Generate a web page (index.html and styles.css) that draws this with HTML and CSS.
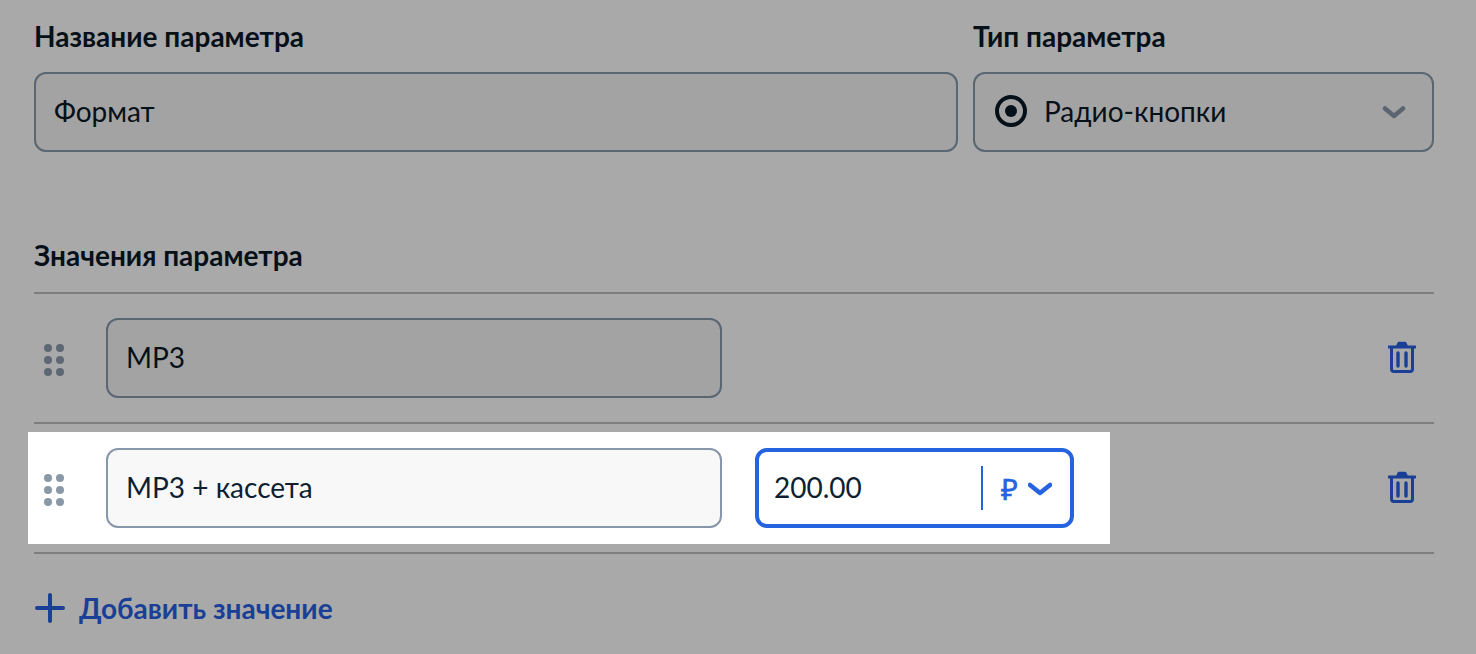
FILE: index.html
```html
<!DOCTYPE html>
<html lang="ru">
<head>
<meta charset="utf-8">
<title>Параметры</title>
<link rel="stylesheet" href="styles.css">
</head>
<body>
<main class="page">
  <section class="head-grid">
    <div class="field">
      <div class="label">Название параметра</div>
      <div class="box dim"><span class="val">Формат</span></div>
    </div>
    <div class="field">
      <div class="label">Тип параметра</div>
      <div class="box dim select">
        <svg class="radio" width="34" height="34" viewBox="0 0 34 34"><circle cx="17" cy="17" r="14" fill="none" stroke="#061019" stroke-width="4"/><circle cx="17" cy="17" r="6" fill="#061019"/></svg>
        <span class="val">Радио-кнопки</span>
        <svg class="chev" width="24" height="14" viewBox="0 0 24 14"><path d="M3 3.5l9 7.5 9-7.5" fill="none" stroke="#5a6571" stroke-width="4.5" stroke-linecap="round" stroke-linejoin="round"/></svg>
      </div>
    </div>
  </section>

  <h2 class="label section">Значения параметра</h2>

  <section class="rows">
    <div class="row">
      <div class="item">
        <svg class="grip" width="20" height="32" viewBox="0 0 20 32" fill="#5d6874"><circle cx="4" cy="4" r="4"/><circle cx="16" cy="4" r="4"/><circle cx="4" cy="16" r="4"/><circle cx="16" cy="16" r="4"/><circle cx="4" cy="28" r="4"/><circle cx="16" cy="28" r="4"/></svg>
        <div class="box dim value"><span class="val">MP3</span></div>
      </div>
      <svg class="trash" width="28" height="32" viewBox="0 0 28 32"><path d="M9 4.5l1.5-3h7l1.5 3z" fill="#193f96" stroke="#193f96" stroke-width="1.5" stroke-linejoin="round"/><path d="M1 6h26" stroke="#193f96" stroke-width="3" stroke-linecap="round"/><path d="M3.5 7v21a2.5 2.5 0 0 0 2.5 2.5h16a2.5 2.5 0 0 0 2.5-2.5V7" fill="none" stroke="#193f96" stroke-width="3"/><path d="M10 12v13M18 12v13" stroke="#193f96" stroke-width="3.4" stroke-linecap="round"/></svg>
    </div>
    <div class="row">
      <div class="item lit">
        <svg class="grip" width="20" height="32" viewBox="0 0 20 32" fill="#8a99a8"><circle cx="4" cy="4" r="4"/><circle cx="16" cy="4" r="4"/><circle cx="4" cy="16" r="4"/><circle cx="16" cy="16" r="4"/><circle cx="4" cy="28" r="4"/><circle cx="16" cy="28" r="4"/></svg>
        <div class="box bright value"><span class="val">MP3 + кассета</span></div>
        <div class="price">
          <span class="val amount">200.00</span>
          <span class="divider"></span>
          <span class="cur">₽</span>
          <svg class="cur-chev" width="24" height="14" viewBox="0 0 24 14"><path d="M2 3l10 8 10-8" fill="none" stroke="#2563e0" stroke-width="4.5" stroke-linecap="round" stroke-linejoin="round"/></svg>
        </div>
      </div>
      <svg class="trash" width="28" height="32" viewBox="0 0 28 32"><path d="M9 4.5l1.5-3h7l1.5 3z" fill="#193f96" stroke="#193f96" stroke-width="1.5" stroke-linejoin="round"/><path d="M1 6h26" stroke="#193f96" stroke-width="3" stroke-linecap="round"/><path d="M3.5 7v21a2.5 2.5 0 0 0 2.5 2.5h16a2.5 2.5 0 0 0 2.5-2.5V7" fill="none" stroke="#193f96" stroke-width="3"/><path d="M10 12v13M18 12v13" stroke="#193f96" stroke-width="3.4" stroke-linecap="round"/></svg>
    </div>
  </section>

  <div class="add">
    <svg width="30" height="30" viewBox="0 0 30 30"><path d="M15 2v26M2 15h26" stroke="#193f96" stroke-width="4" stroke-linecap="round"/></svg>
    <span>Добавить значение</span>
  </div>
</main>
</body>
</html>
```

FILE: styles.css
```css
* { box-sizing: border-box; }
html, body { margin: 0; height: 100%; overflow: hidden; }
body {
  background: #a9a9a9;
  font-family: "Lato", "Noto Sans", "Open Sans", sans-serif;
  color: #061019;
}
.page { padding: 18px 42px 0 34px; }
.head-grid { display: grid; grid-template-columns: 924px 461px; gap: 15px; }
.label { font-size: 28px; font-weight: 700; line-height: 36px; margin: 0; color: #061019; }
.field .label { margin-bottom: 18px; }
.box {
  height: 80px;
  border-radius: 12px;
  border: 2px solid #5a6672;
  display: flex;
  align-items: center;
  padding: 0 18px;
}
.dim { background: #a3a3a3; }
.bright { background: #f8f8f8; border-color: #8796a8; }
.val { font-size: 28px; line-height: 36px; position: relative; top: -1px; }
.lit .val { color: #0d1f30; }
.select { padding-left: 19px; }
.radio { margin-right: 16px; flex: none; position: relative; top: -1px; }
.chev { margin-left: auto; margin-right: 8px; }
.section { margin-top: 85px; }
.rows { margin-top: 19px; border-top: 2px solid #7e7e7e; }
.row {
  height: 130px;
  border-bottom: 2px solid #7e7e7e;
  display: flex;
  align-items: center;
  justify-content: space-between;
  padding-right: 18px;
}
.item {
  display: flex;
  align-items: center;
  margin-left: -6px;
  padding: 16px 36px 16px 16px;
}
.lit { background: #fff; }
.grip { flex: none; margin-right: 42px; position: relative; top: 2px; }
.trash { position: relative; top: -1px; }
.value { width: 616px; }
.price {
  width: 319px;
  height: 80px;
  margin-left: 33px;
  border: 4px solid #2563e0;
  border-radius: 12px;
  display: flex;
  align-items: center;
  padding-left: 15px;
  color: #2563e0;
}
.amount { width: 207px; }
.divider { width: 2px; height: 44px; background: #2563e0; flex: none; }
.cur { font-size: 29px; font-weight: 400; -webkit-text-stroke: 0.6px #2563e0; margin-left: 18px; width: 27px; }
.cur-chev { position: relative; top: 1px; }
.add {
  display: flex;
  align-items: center;
  gap: 14px;
  margin-top: 38px;
  padding-left: 1px;
  color: #193f96;
  font-size: 28px;
  font-weight: 700;
  line-height: 32px;
}
```
